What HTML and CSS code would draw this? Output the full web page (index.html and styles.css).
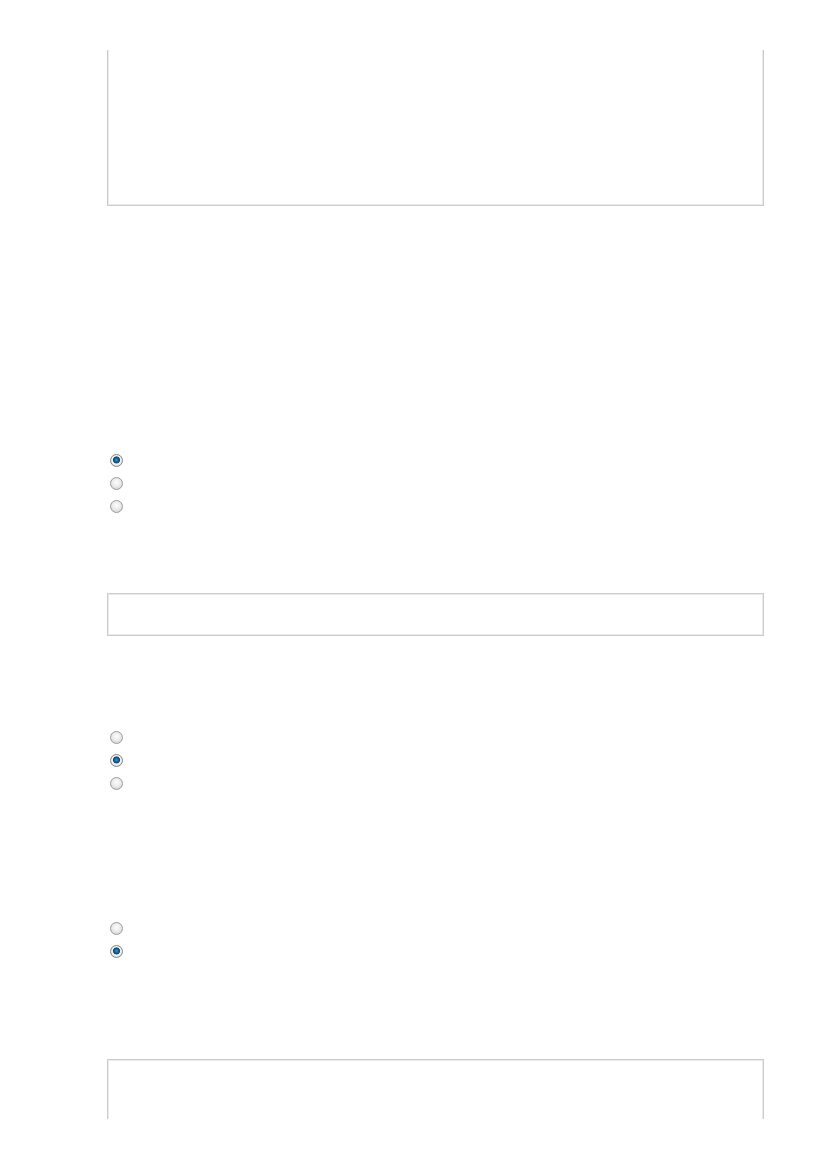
FILE: index.html
```html
<!DOCTYPE html>
<html>
<head>
<meta charset="utf-8">
<link rel="stylesheet" href="styles.css">
</head>
<body>
<div class="sheet">
  <div class="box box-top"></div>
  <div class="group g1">
    <div class="row"><span class="radio on"></span></div>
    <div class="row"><span class="radio"></span></div>
    <div class="row"><span class="radio"></span></div>
  </div>
  <div class="box box-mid"></div>
  <div class="group g2">
    <div class="row"><span class="radio"></span></div>
    <div class="row"><span class="radio on"></span></div>
    <div class="row"><span class="radio"></span></div>
  </div>
  <div class="group g3">
    <div class="row"><span class="radio"></span></div>
    <div class="row"><span class="radio on"></span></div>
  </div>
  <div class="box box-bottom"></div>
</div>
</body>
</html>
```
FILE: styles.css
```css
html, body {
  margin: 0;
  padding: 0;
  background: #ffffff;
  font-family: "Liberation Sans", Arial, sans-serif;
}
.sheet {
  margin: 50px 0 0 107px;
  width: 657px;
  height: 1069px;
  overflow: hidden;
}
.box {
  box-sizing: border-box;
  border: 1px solid #cccccc;
  box-shadow: inset 0 0 0 1px #ebebeb;
  background: #fff;
}
.box-top {
  height: 156px;
  border-top: none;
  box-shadow: inset 1px 0 #ebebeb, inset -1px 0 #ebebeb, inset 0 -1px #ebebeb;
}
.box-mid {
  height: 43px;
  margin-top: 75px;
}
.box-bottom {
  height: 200px;
  margin-top: 96px;
}
.group { display: flex; flex-direction: column; }
.g1 { margin-top: 243px; }
.g2 { margin-top: 90px; }
.g3 { margin-top: 122px; }
.row {
  height: 23px;
  display: flex;
  align-items: center;
  padding-left: 3px;
}
.radio {
  box-sizing: border-box;
  width: 13px;
  height: 13px;
  border-radius: 50%;
  border: 1px solid #9c9c9c;
  background: radial-gradient(circle at 50% 40%, #fdfdfd 0, #ececec 45%, #c9c9c9 100%);
}
.radio.on {
  border-color: #858585;
  background: radial-gradient(circle at 50% 45%, #3b95d0 0, #1a6aa6 1.6px, #0e4670 3.2px, #e8e8e8 3.8px, #f4f4f4 4.4px, #bdbdbd 100%);
}
```
